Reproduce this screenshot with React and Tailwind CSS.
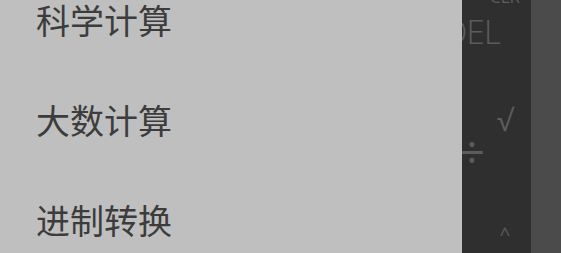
import React from 'react'

const menuItems = ['科学计算', '大数计算', '进制转换']

// keypad columns behind the drawer: label, cell height, text classes
const leftKeys = [
  { label: 'DEL', h: 'h-[120px]', cls: 'text-[33px] font-light tracking-tight' },
  { label: '÷', h: 'h-[120px]', cls: 'text-[46px]' },
]
const rightKeys = [
  { label: 'CLR', h: 'h-[120px]', cls: 'text-[17px]' },
  { label: '√', h: 'h-[128px]', cls: 'text-[30px]' },
  { label: '^', h: 'h-[100px]', cls: 'text-[19px]' },
]

const KeyColumn = ({ keys, className }) => (
  <div className={`flex flex-col ${className}`}>
    {keys.map((k) => (
      <div key={k.label} className={`flex shrink-0 items-center justify-center leading-none ${k.h} ${k.cls}`}>
        {k.label}
      </div>
    ))}
  </div>
)

const Keypad = () => (
  <div className="flex h-full w-full">
    <div
      className="flex h-full w-[531px] overflow-hidden bg-[#2f2f2f] pl-[440px] text-[#5c5c5c]"
      style={{ fontFamily: '"Open Sans", "Liberation Sans", sans-serif' }}
    >
      <KeyColumn keys={leftKeys} className="-mt-[29px] w-[64px] shrink-0" />
      <KeyColumn keys={rightKeys} className="-ml-[16px] -mt-[64px] w-[34px] shrink-0" />
    </div>
    <div className="h-full flex-1 bg-[#4b4b4b]" />
  </div>
)

export default function App() {
  return (
    <div className="relative h-[253px] w-[561px] overflow-hidden">
      <Keypad />
      <nav className="absolute left-0 top-0 z-10 h-full w-[462px] bg-[#bfbfbf]">
        <ul className="-mt-[30px] flex flex-col">
          {menuItems.map((item) => (
            <li
              key={item}
              className="flex h-[100px] items-center pl-[36px] text-[34px] leading-none text-[#3c3c3c]"
              style={{ fontFamily: '"Noto Sans CJK SC", "Noto Sans", sans-serif' }}
            >
              {item}
            </li>
          ))}
        </ul>
      </nav>
    </div>
  )
}
